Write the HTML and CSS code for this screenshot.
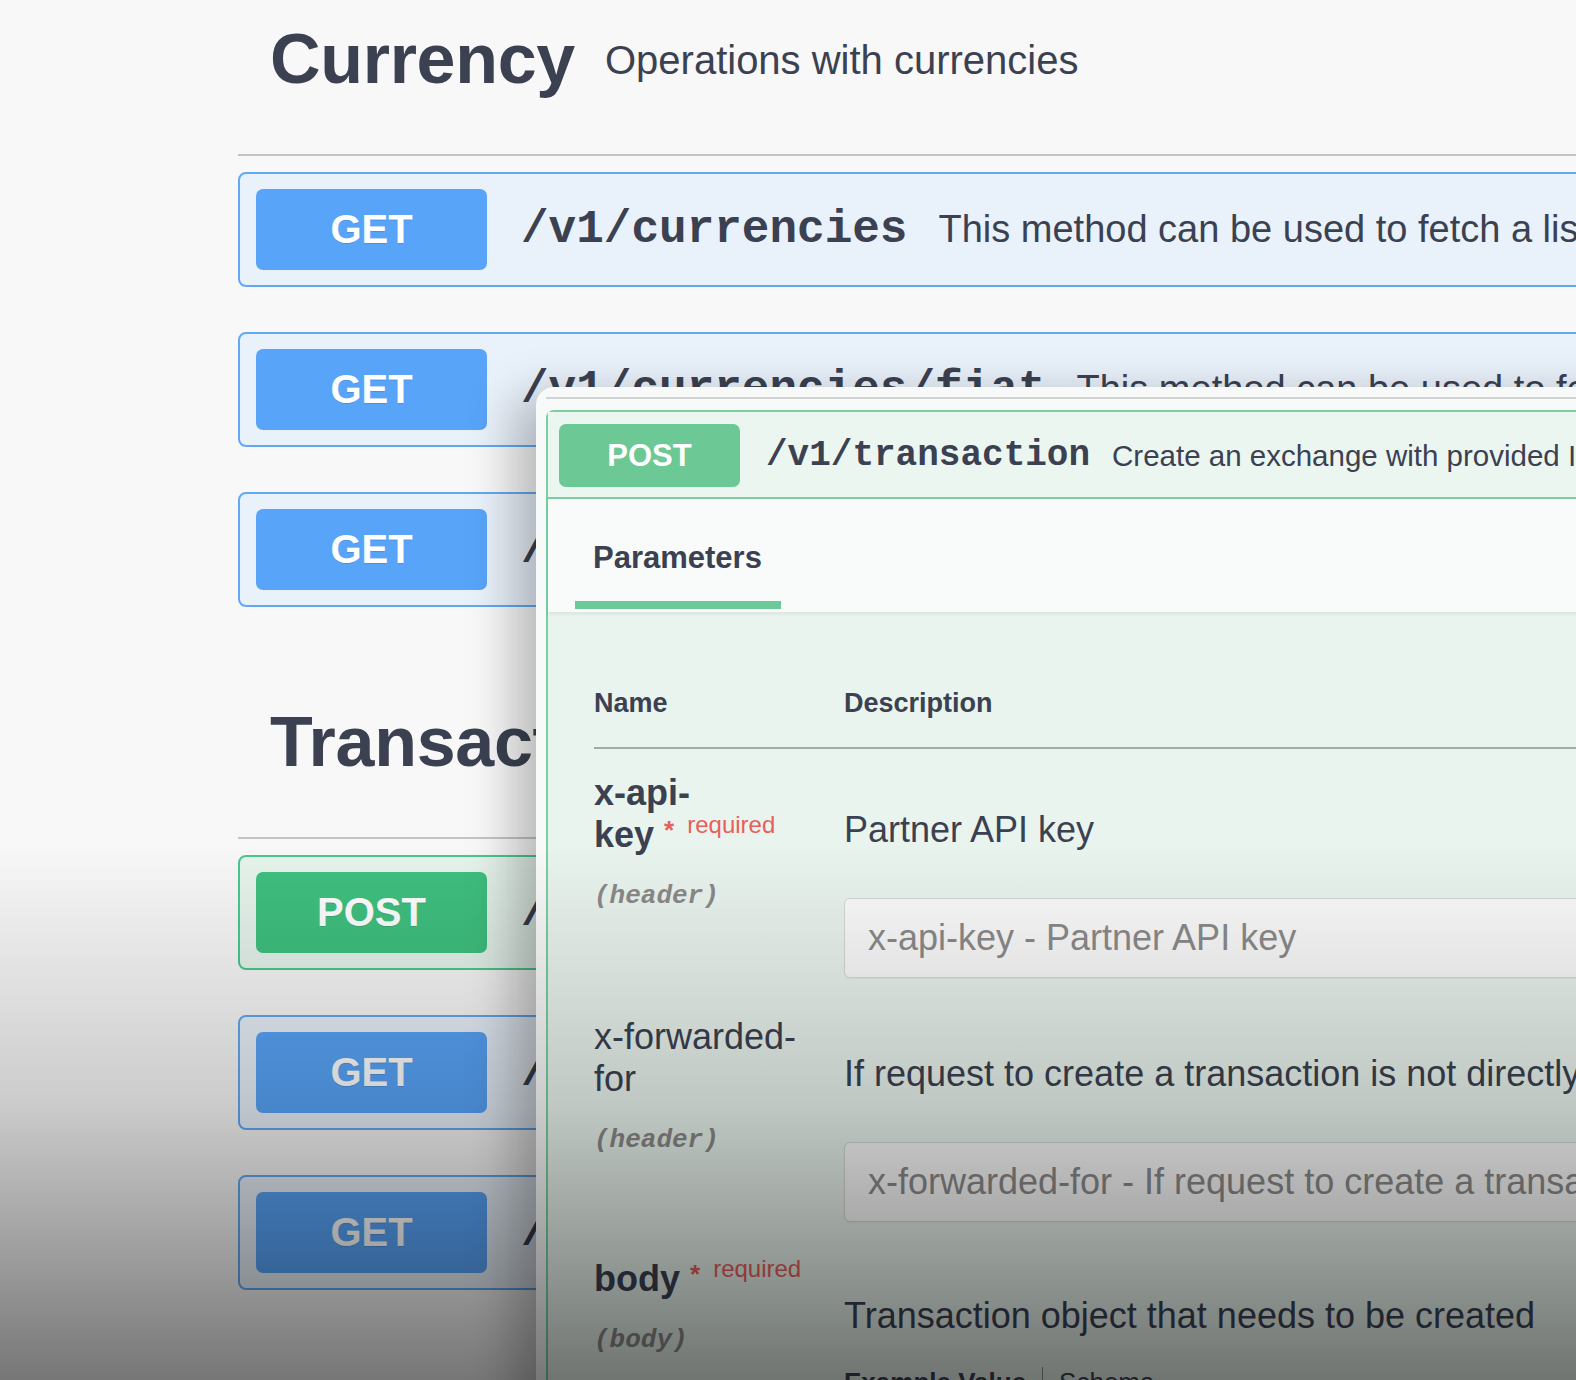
FILE: index.html
```html
<!DOCTYPE html>
<html lang="en">
<head>
<meta charset="utf-8">
<title>Swagger – Currency &amp; Transactions</title>
<link rel="stylesheet" href="styles.css">
</head>
<body>
<div class="page">
  <section class="tag">
    <div class="tag-head">
      <h2 class="tag-title">Currency</h2>
      <span class="tag-desc">Operations with currencies</span>
    </div>
    <div class="op op-get">
      <span class="method">GET</span>
      <span class="path">/v1/currencies</span>
      <span class="summary">This method can be used to fetch a list of supported currencies</span>
    </div>
    <div class="op op-get">
      <span class="method">GET</span>
      <span class="path">/v1/currencies/fiat</span>
      <span class="summary">This method can be used to fetch a list of fiat currencies</span>
    </div>
    <div class="op op-get">
      <span class="method">GET</span>
      <span class="path">/v1/currencies/crypto</span>
      <span class="summary">This method can be used to fetch a list of crypto currencies</span>
    </div>
  </section>

  <section class="tag">
    <div class="tag-head">
      <h2 class="tag-title">Transactions</h2>
      <span class="tag-desc">Operations with transactions</span>
    </div>
    <div class="op op-post">
      <span class="method">POST</span>
      <span class="path">/v1/transaction</span>
      <span class="summary">Create an exchange with provided ID</span>
    </div>
    <div class="op op-get">
      <span class="method">GET</span>
      <span class="path">/v1/transaction/{id}</span>
      <span class="summary">Get transaction status</span>
    </div>
    <div class="op op-get">
      <span class="method">GET</span>
      <span class="path">/v1/transactions</span>
      <span class="summary">Get list of transactions</span>
    </div>
  </section>
</div>

<div class="panel">
  <div class="panel-inner">
    <div class="xop">
      <div class="xop-head">
        <span class="xop-method">POST</span>
        <span class="xop-path">/v1/transaction</span>
        <span class="xop-sum">Create an exchange with provided ID</span>
      </div>
      <div class="xop-tabs">
        <span class="tab">Parameters</span>
      </div>
      <div class="params">
        <div class="params-head">
          <div class="col-name">Name</div>
          <div class="col-desc">Description</div>
        </div>

        <div class="prow">
          <div class="pname">
            <div class="pname-text"><span class="nm">x-api-key</span>&nbsp;<span class="req"><span class="req-star">*</span><span class="req-label">required</span></span></div>
            <div class="pin">(header)</div>
          </div>
          <div class="pdesc">
            <p>Partner API key</p>
            <input class="pinput" type="text" placeholder="x-api-key - Partner API key">
          </div>
        </div>

        <div class="prow">
          <div class="pname">
            <div class="pname-text"><span class="nm-plain">x-forwarded-for</span></div>
            <div class="pin">(header)</div>
          </div>
          <div class="pdesc">
            <p>If request to create a transaction is not directly made by the end user</p>
            <input class="pinput" type="text" placeholder="x-forwarded-for - If request to create a transaction is not directly made by the end user">
          </div>
        </div>

        <div class="prow prow-last">
          <div class="pname">
            <div class="pname-text"><span class="nm">body</span>&nbsp;<span class="req"><span class="req-star">*</span><span class="req-label">required</span></span></div>
            <div class="pin">(body)</div>
          </div>
          <div class="pdesc">
            <p>Transaction object that needs to be created</p>
            <div class="example-tabs"><span class="ex-active">Example Value</span><span class="ex-sep"></span><span class="ex-other">Schema</span></div>
          </div>
        </div>
      </div>
    </div>
  </div>
</div>

<div class="shade"></div>
</body>
</html>
```

FILE: styles.css
```css
* { box-sizing: border-box; }

html, body {
  margin: 0;
  padding: 0;
}

body {
  position: relative;
  width: 1576px;
  height: 1380px;
  overflow: hidden;
  background: #f8f8f8;
  font-family: "Liberation Sans", Arial, sans-serif;
  color: #3b4151;
}

/* ---------- background list ---------- */
.page {
  width: 1800px;
  padding-left: 238px;
}

.tag + .tag {
  margin-top: 76px;
}

.tag-head {
  height: 156px;
  border-bottom: 2px solid #c4c4c4;
  padding: 24px 0 0 32px;
  display: flex;
  align-items: flex-start;
  white-space: nowrap;
}

.tag-title {
  margin: 0;
  font-size: 70px;
  line-height: 70px;
  font-weight: bold;
  letter-spacing: -0.3px;
}

.tag-desc {
  margin: 16px 0 0 30px;
  font-size: 40px;
  line-height: 40px;
}

.op {
  display: flex;
  align-items: center;
  height: 115px;
  margin-top: 45px;
  padding-left: 16px;
  border: 2px solid #61a9f3;
  border-radius: 8px;
  background: #e9f1fa;
  white-space: nowrap;
}

.tag-head + .op {
  margin-top: 16px;
}

.method {
  flex-shrink: 0;
  width: 231px;
  height: 81px;
  border-radius: 7px;
  background: #58a4f8;
  color: #fff;
  font-size: 40px;
  font-weight: bold;
  display: flex;
  align-items: center;
  justify-content: center;
  text-shadow: 0 1px 0 rgba(0, 0, 0, 0.12);
}

.path {
  margin-left: 34px;
  font-family: "Liberation Mono", "Courier New", monospace;
  font-weight: bold;
  font-size: 46px;
}

.summary {
  margin-left: 31px;
  font-size: 38px;
}

.op-post {
  border-color: #49c98d;
  background: #e6f4ec;
}

.op-post .method {
  background: #3fc07f;
}

/* ---------- expanded operation panel ---------- */
.panel {
  position: absolute;
  left: 536px;
  top: 387px;
  width: 1200px;
  height: 1100px;
  padding: 10px 0 0 10px;
  background: #f8faf9;
  border-top-left-radius: 18px;
  box-shadow: -22px 10px 48px rgba(0, 0, 0, 0.26);
}

.panel-inner {
  height: 100%;
  padding-top: 11px;
  border-top: 2px solid #d2d4d3;
}

.xop {
  height: 100%;
  border: 2px solid #78cfa0;
  border-right: 0;
  border-bottom: 0;
  border-top-left-radius: 8px;
  background: #eaf4ee;
}

.xop-head {
  display: flex;
  align-items: center;
  padding: 12px 0 10px 11px;
  background: #ecf6f1;
  border-bottom: 2px solid #78cfa0;
  white-space: nowrap;
}

.xop-method {
  flex-shrink: 0;
  width: 181px;
  height: 63px;
  border-radius: 7px;
  background: #6cc894;
  color: #fff;
  font-size: 31px;
  font-weight: bold;
  display: flex;
  align-items: center;
  justify-content: center;
}

.xop-path {
  margin-left: 26px;
  font-family: "Liberation Mono", "Courier New", monospace;
  font-weight: bold;
  font-size: 36px;
}

.xop-sum {
  margin-left: 22px;
  font-size: 29.5px;
}

.xop-tabs {
  position: relative;
  padding: 41px 0 3px 27px;
  background: #f9fbfa;
  box-shadow: 0 2px 4px rgba(0, 0, 0, 0.07);
}

.tab {
  display: inline-block;
  padding: 0 19px 25px 18px;
  border-bottom: 8px solid #6cc998;
  font-size: 31px;
  line-height: 36px;
  font-weight: bold;
}

.params {
  padding: 75px 0 0 46px;
}

.params-head {
  display: flex;
  padding-bottom: 28px;
  border-bottom: 2px solid #a3aaa7;
  font-size: 27px;
  line-height: 32px;
  font-weight: bold;
}

.col-name {
  width: 250px;
  flex-shrink: 0;
}

.col-desc {
  flex: 1;
}

.prow {
  display: flex;
  padding: 23px 0 15px;
}

.prow-last {
  padding-top: 21px;
}

.pname {
  width: 250px;
  flex-shrink: 0;
  padding-right: 25px;
}

.pname-text {
  font-size: 36px;
  line-height: 42px;
}

.nm {
  font-weight: bold;
}

.req {
  white-space: nowrap;
  color: #e75f5b;
  font-size: 24px;
  line-height: 0;
  vertical-align: 14px;
}

.req-star {
  font-size: 26px;
  font-weight: bold;
  vertical-align: -6px;
}

.req-label {
  margin-left: 13px;
  font-weight: normal;
}

.pin {
  margin-top: 25px;
  font-family: "Liberation Mono", "Courier New", monospace;
  font-style: italic;
  font-weight: bold;
  font-size: 26px;
  line-height: 30px;
  color: #8a8a8a;
}

.pdesc {
  flex: 1;
  min-width: 0;
  padding-top: 37px;
}

.pdesc p {
  margin: 0;
  font-size: 36px;
  line-height: 42px;
  white-space: nowrap;
}

.pinput {
  display: block;
  width: 900px;
  height: 80px;
  margin-top: 47px;
  padding: 0 0 0 23px;
  border: 1px solid #d5d8d7;
  border-radius: 6px;
  background: #fbfbfb;
  font-family: "Liberation Sans", Arial, sans-serif;
  font-size: 36px;
  color: #3b4151;
  box-shadow: 0 1px 2px rgba(0, 0, 0, 0.04);
}

.pinput::placeholder {
  color: #8b8b8b;
  opacity: 1;
}

.example-tabs {
  margin-top: 30px;
  display: flex;
  align-items: center;
  font-size: 26px;
  line-height: 30px;
  white-space: nowrap;
}

.ex-active {
  font-weight: bold;
}

.ex-sep {
  width: 1px;
  height: 30px;
  margin: 0 16px;
  background: #8f9794;
}

/* ---------- bottom vignette ---------- */
.shade {
  position: absolute;
  inset: 0;
  pointer-events: none;
  background: linear-gradient(to bottom,
    rgba(0, 0, 0, 0) 61%,
    rgba(0, 0, 0, 0.18) 80%,
    rgba(0, 0, 0, 0.52) 100%);
}
```
